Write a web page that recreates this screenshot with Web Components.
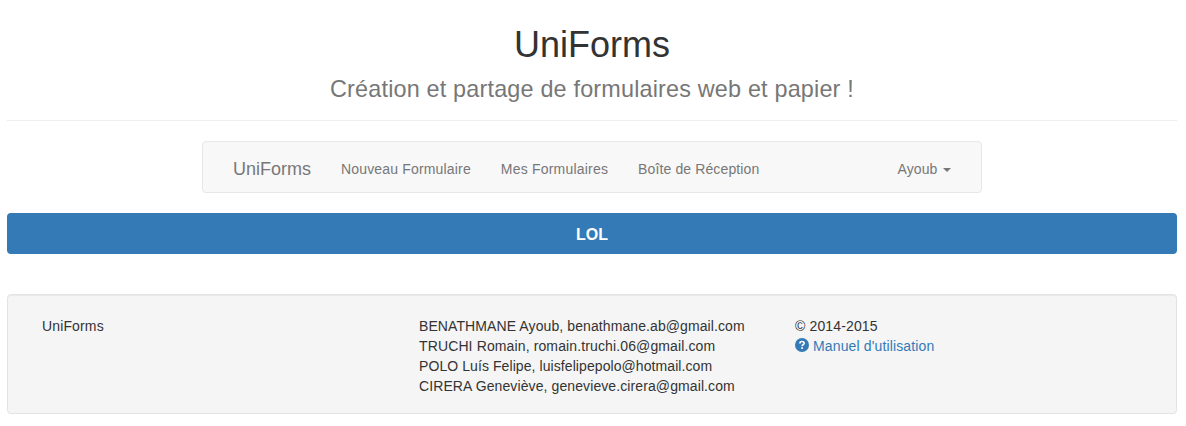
<!DOCTYPE html>
<html lang="fr">
<head>
<meta charset="utf-8">
<title>UniForms</title>
<style>
body{margin:0;background:#fff;color:#333;font:14px/20px "Liberation Sans",Arial,sans-serif}
</style>
</head>
<body>
<uf-page>
  <uf-header>UniForms<span slot="tagline">Création et partage de formulaires web et papier !</span></uf-header>
  <uf-navbar>
    <uf-link large>UniForms</uf-link>
    <uf-link style="letter-spacing:.167px">Nouveau Formulaire</uf-link>
    <uf-link style="letter-spacing:.2px">Mes Formulaires</uf-link>
    <uf-link style="letter-spacing:.12px">Boîte de Réception</uf-link>
    <uf-link slot="right" caret style="letter-spacing:.1px">Ayoub</uf-link>
  </uf-navbar>
  <uf-banner>LOL</uf-banner>
  <uf-footer>
    <div>UniForms</div>
    <div><span style="letter-spacing:.095px">BENATHMANE Ayoub, benathmane.ab@gmail.com</span><br><span style="letter-spacing:.125px">TRUCHI Romain, romain.truchi.06@gmail.com</span><br><span style="letter-spacing:.08px">POLO Luís Felipe, luisfelipepolo@hotmail.com</span><br><span style="letter-spacing:.1px">CIRERA Geneviève, genevieve.cirera@gmail.com</span></div>
    <div>© 2014-2015<br><uf-help>Manuel d'utilisation</uf-help></div>
  </uf-footer>
</uf-page>
<script>
const define = (name, markup) => {
  const t = document.createElement('template');
  t.innerHTML = markup;
  customElements.define(name, class extends HTMLElement {
    constructor() {
      super();
      this.attachShadow({mode: 'open'}).append(t.content.cloneNode(true));
    }
  });
};
define('uf-page', `<style>:host{display:block;width:1170px;margin-left:7px;padding-top:25px}</style><slot></slot>`);
define('uf-header', `<style>
:host{display:block;height:95px;border-bottom:1px solid #eee;margin-bottom:20px;text-align:center}
h1{margin:0;font-size:36px;line-height:40px;font-weight:400}
p{margin:11px 0 0;font-size:23.4px;line-height:26px;letter-spacing:.18px;color:#777}
</style><h1><slot></slot></h1><p><slot name="tagline"></slot></p>`);
define('uf-navbar', `<style>
:host{display:flex;justify-content:space-between;box-sizing:border-box;width:780px;height:52px;margin:0 auto 20px;padding:0 15px;background:#f8f8f8;border:1px solid #e7e7e7;border-radius:4px}
nav{display:flex}
</style><nav><slot></slot></nav><nav><slot name="right"></slot></nav>`);
define('uf-link', `<style>
:host{display:flex;align-items:center;height:20px;padding:17px 15px 13px;color:#777;white-space:nowrap}
:host([large]){font-size:18px}
i{display:none;margin:2px 0 0 5.5px;border:4px solid transparent;border-top-color:#777;border-bottom:0}
:host([caret]) i{display:block}
</style><slot></slot><i></i>`);
define('uf-banner', `<style>
:host{display:block;height:41px;margin-bottom:40px;border-radius:4px;background:#337ab7;color:#fff;text-align:center;font-weight:700;font-size:16px;line-height:43px}
</style><slot></slot>`);
define('uf-footer', `<style>
:host{display:grid;grid-template-columns:377px 376px 1fr;box-sizing:border-box;height:120px;padding:21px 0 0 34px;background:#f5f5f5;border:1px solid #e3e3e3;border-radius:4px;box-shadow:inset 0 1px 1px rgba(0,0,0,.05);letter-spacing:.14px;white-space:nowrap}
</style><slot></slot>`);
define('uf-help', `<style>
:host{display:flex;align-items:center;gap:4px;color:#337ab7}
svg{width:14px;height:14px;margin-top:-2px}
</style><svg viewBox="0 0 14 14"><circle cx="7" cy="7" r="7" fill="#337ab7"/><path d="M4.9 5.5C4.9 4.1 5.7 3.5 7 3.5S9.2 4.2 9.2 5.2C9.2 6.5 7.1 6.6 7.1 8.2" fill="none" stroke="#f5f5f5" stroke-width="1.7"/><path d="M6.2 9.2h1.8v1.7h-1.8z" fill="#f5f5f5"/></svg><span><slot></slot></span>`);
</script>
</body>
</html>
